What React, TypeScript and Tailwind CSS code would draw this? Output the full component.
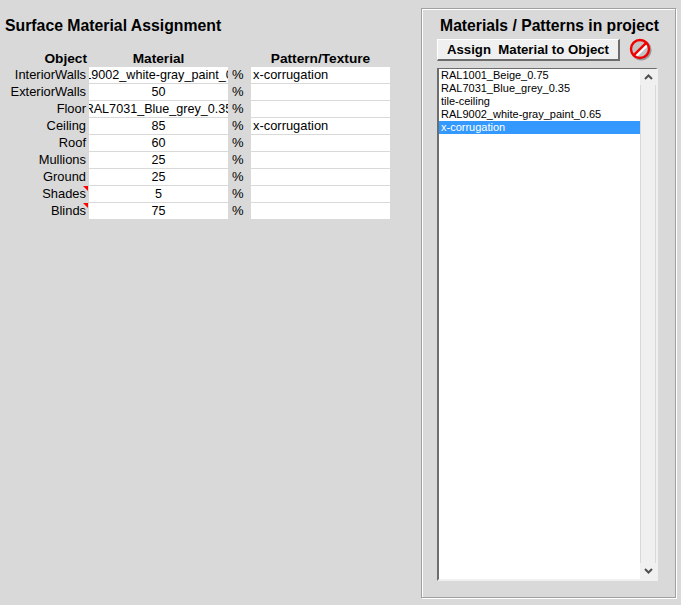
const rows = [
  { name: 'InteriorWalls', value: 'RAL9002_white-gray_paint_0.65', pattern: 'x-corrugation' },
  { name: 'ExteriorWalls', value: '50', pattern: '' },
  { name: 'Floor', value: 'RAL7031_Blue_grey_0.35', pattern: '' },
  { name: 'Ceiling', value: '85', pattern: 'x-corrugation' },
  { name: 'Roof', value: '60', pattern: '' },
  { name: 'Mullions', value: '25', pattern: '' },
  { name: 'Ground', value: '25', pattern: '' },
  { name: 'Shades', value: '5', pattern: '', note: true },
  { name: 'Blinds', value: '75', pattern: '', note: true },
]

const materials = ['RAL1001_Beige_0.75', 'RAL7031_Blue_grey_0.35', 'tile-ceiling', 'RAL9002_white-gray_paint_0.65', 'x-corrugation']

function NoIcon() {
  return (
    <svg className="w-[24px] h-[24px]" viewBox="0 0 24 24">
      <circle cx="12.2" cy="12.2" r="10.4" fill="#9a9a9a" />
      <circle cx="11" cy="11" r="9.6" fill="#c4c4c4" />
      <path d="M6.5 17.5L17.5 6.5" stroke="#ffffff" strokeWidth="4" />
      <path d="M4.6 17.4L17.4 4.6" stroke="#f00000" strokeWidth="2.4" />
      <circle cx="11" cy="11" r="9" fill="none" stroke="#f00000" strokeWidth="2.4" />
    </svg>
  )
}

function Chevron({ up }: { up?: boolean }) {
  return (
    <svg className="w-[9px] h-[6px]" viewBox="0 0 9 6">
      <path d={up ? 'M1 5L4.5 1.5L8 5' : 'M1 1L4.5 4.5L8 1'} fill="none" stroke="#505050" strokeWidth="2" />
    </svg>
  )
}

export default function App() {
  return (
    <div className="w-[681px] h-[605px] bg-[#d9d9d9] flex font-['Liberation_Sans',Arial,sans-serif] text-black overflow-hidden">
      {/* Left sheet */}
      <div className="w-[421px] shrink-0 pt-[16px] pl-[5px]">
        <h1 className="text-[15.8px] leading-[20px] font-bold">Surface Material Assignment</h1>

        <div className="mt-[14px] flex text-[13.7px] font-bold h-[17px] leading-[17px]">
          <div className="w-[82px] text-right">Object</div>
          <div className="w-[139px] ml-[2px] text-center">Material</div>
          <div className="w-[23px]" />
          <div className="w-[139px] text-center">Pattern/Texture</div>
        </div>

        <div className="flex flex-col text-[12.9px] leading-[16px]">
          {rows.map(r => (
            <div key={r.name} className="flex h-[17px]">
              <div className="relative w-[83px] pr-[2px] text-right whitespace-nowrap">
                {r.name}
                {r.note && (
                  <div className="absolute top-0 right-0 w-0 h-0 border-t-[5px] border-l-[5px] border-t-[#f00] border-l-transparent" />
                )}
              </div>
              <div className="w-[1px]" />
              <div className="w-[139px] h-[16px] bg-white flex justify-center overflow-hidden whitespace-nowrap text-[12.6px]">{r.value}</div>
              <div className="w-[23px] pl-[4px] text-[13px]">%</div>
              <div className="w-[139px] h-[16px] bg-white pl-[2px]">{r.pattern}</div>
            </div>
          ))}
        </div>
      </div>

      {/* Materials panel */}
      <div className="mt-[8px] w-[255px] h-[590px] border border-[#a0a0a0] shadow-[inset_1px_1px_0_#fff,1px_1px_0_#fff] pt-[7px] pl-[15px] flex flex-col">
        <div className="w-[225px] text-center text-[15.7px] leading-[20px] font-bold whitespace-nowrap">Materials / Patterns in project</div>

        <div className="mt-[2px] flex items-center">
          <button className="w-[183px] h-[22px] pt-[1px] bg-[#f0f0f0] border-t border-l border-t-white border-l-white border-r-2 border-b-2 border-r-[#6d6d6d] border-b-[#6d6d6d] text-[13.2px] font-bold leading-[18px] whitespace-pre text-center">
            Assign  Material to Object
          </button>
          <div className="ml-[9px]">
            <NoIcon />
          </div>
        </div>

        <div className="mt-[6px] w-[221px] h-[513px] bg-white border-t border-l-2 border-t-[#6d6d6d] border-l-[#6d6d6d] border-b-2 border-r-2 border-b-[#f0f0f0] border-r-[#f0f0f0] flex">
          <div className="w-[203px] text-[11px] leading-[13px]">
            {materials.map(m => (
              <div key={m} className={m === 'x-corrugation' ? 'h-[13px] pl-[2px] bg-[#3399ff] text-white' : 'h-[13px] pl-[2px]'}>
                {m}
              </div>
            ))}
          </div>
          <div className="w-[16px] flex flex-col bg-[#f0f0f0]">
            <div className="h-[16px] flex items-center justify-center">
              <Chevron up />
            </div>
            <div className="flex-1 border-l border-r border-l-[#d9d9d9] border-r-[#d9d9d9]" />
            <div className="h-[16px] flex items-center justify-center">
              <Chevron />
            </div>
          </div>
        </div>
      </div>
    </div>
  )
}
